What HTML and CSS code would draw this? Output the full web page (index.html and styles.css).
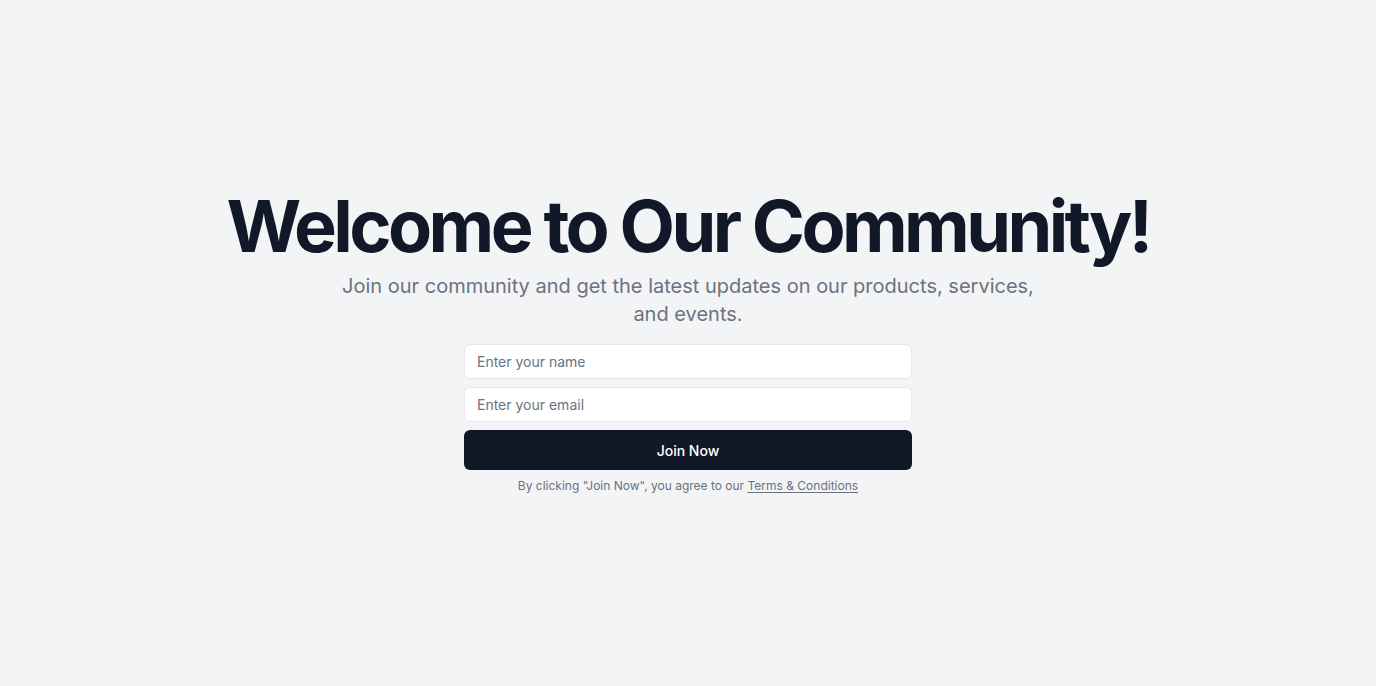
FILE: index.html
```html
<!DOCTYPE html>
<html lang="en">
<head>
<meta charset="utf-8">
<title>Welcome</title>
<link rel="stylesheet" href="styles.css">
</head>
<body>
<main class="page">
  <section class="hero">
    <h1 class="title">Welcome to Our Community!</h1>
    <p class="subtitle">Join our community and get the latest updates on our products, services, and events.</p>
    <form class="form">
      <input class="field" type="text" placeholder="Enter your name">
      <input class="field" type="email" placeholder="Enter your email">
      <button class="btn" type="button">Join Now</button>
      <p class="note">By clicking "Join Now", you agree to our <a class="link" href="#">Terms &amp; Conditions</a></p>
    </form>
  </section>
</main>
</body>
</html>
```

FILE: styles.css
```css
* { box-sizing: border-box; }
html, body { margin: 0; padding: 0; }
body {
  background: #f3f4f6;
  font-family: Inter, "Noto Sans", sans-serif;
  color: #111827;
}
.page {
  min-height: 686px;
  display: flex;
  align-items: center;
  justify-content: center;
}
.hero {
  display: flex;
  flex-direction: column;
  align-items: center;
  text-align: center;
  padding-bottom: 2px;
}
.title {
  margin: 0;
  font-size: 72px;
  line-height: 1;
  font-weight: 700;
  letter-spacing: -0.05em;
  color: #111827;
}
.subtitle {
  margin: 10px 0 0;
  max-width: 700px;
  font-size: 20px;
  line-height: 28px;
  color: #6b7280;
}
.form {
  margin-top: 16px;
  width: 448px;
  display: flex;
  flex-direction: column;
  gap: 8px;
}
.field {
  height: 35px;
  padding: 0 12px;
  border: 1px solid #e5e7eb;
  border-radius: 6px;
  background: #fff;
  font-family: inherit;
  font-size: 14px;
  color: #111827;
  outline: none;
}
.field::placeholder { color: #6b7280; }
.btn {
  height: 40px;
  border: 0;
  border-radius: 6px;
  background: #111827;
  color: #fff;
  font-family: inherit;
  font-size: 14px;
  font-weight: 500;
  cursor: pointer;
}
.note {
  margin: 0;
  font-size: 12px;
  line-height: 16px;
  color: #6b7280;
}
.link {
  color: #6b7280;
  text-decoration: underline;
  text-underline-offset: 2px;
}
```
